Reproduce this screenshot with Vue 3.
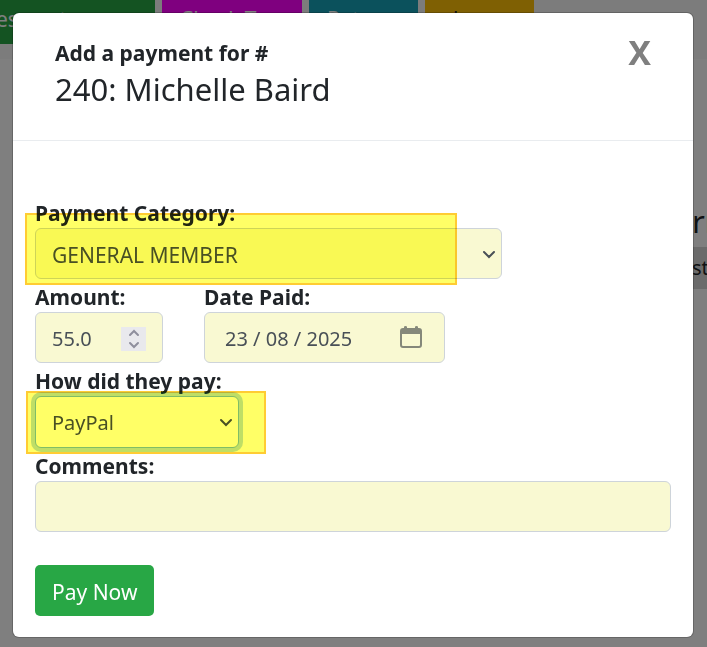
<script setup>
import { ref } from 'vue';

const category = ref('GENERAL MEMBER');
const amount = ref('55.0');
const datePaid = ref('23 / 08 / 2025');
const method = ref('PayPal');
const comments = ref('');
const showModal = ref(true);

const tabs = [
    { name: 'es cont', color: 'green' },
    { name: 'Check Tags', color: 'magenta' },
    { name: 'Return', color: 'teal' },
    { name: 'show', color: 'yellow' },
];

const step = (n) =>{
    amount.value = (Number(amount.value) + n).toFixed(1);
}

const closeModal = () =>{
    showModal.value = false;
}
</script>

<template>
    <div class="page">
        <nav class="tabs">
            <button v-for="tab in tabs" :key="tab.name" type="button" class="tab" :class="tab.color">{{ tab.name }}</button>
        </nav>
        <main class="behind">
            <div class="behind-title">r<span class="accent">r</span></div>
            <div class="behind-row">st<span class="accent">e</span></div>
        </main>
    </div>

    <div v-if="showModal" class="backdrop">
        <div class="modal" role="dialog" aria-labelledby="modal-title">
            <header class="modal-header">
                <h1 id="modal-title" class="title">
                    <strong>Add a payment for #</strong>
                    <span class="member">240: Michelle Baird</span>
                </h1>
                <button type="button" class="close" aria-label="Close" @click="closeModal">X</button>
            </header>

            <form class="modal-body" @submit.prevent>
                <div class="field category marked">
                    <label for="category">Payment Category:</label>
                    <div class="select-wrap">
                        <select id="category" v-model="category" class="control">
                            <option>GENERAL MEMBER</option>
                        </select>
                        <svg class="chevron" viewBox="0 0 14 10"><path d="M2 2l5 5 5-5" /></svg>
                    </div>
                </div>

                <div class="row">
                    <div class="field amount">
                        <label for="amount">Amount:</label>
                        <div class="control box">
                            <input id="amount" v-model="amount" type="text" inputmode="decimal" class="bare">
                            <div class="spinner">
                                <button type="button" aria-label="Increase" @click="step(1)">
                                    <svg viewBox="0 0 12 8"><path d="M2 6l4-4 4 4" /></svg>
                                </button>
                                <button type="button" aria-label="Decrease" @click="step(-1)">
                                    <svg viewBox="0 0 12 8"><path d="M2 2l4 4 4-4" /></svg>
                                </button>
                            </div>
                        </div>
                    </div>
                    <div class="field date">
                        <label for="date">Date Paid:</label>
                        <div class="control box">
                            <input id="date" v-model="datePaid" type="text" class="bare">
                            <button type="button" class="calendar" aria-label="Pick a date">
                                <svg viewBox="0 0 22 22">
                                    <path fill-rule="evenodd" d="M4 2V1a1.500 1 0 0 1 3 0V2h8V1a1.500 1 0 0 1 3 0V2h1a3 3 0 0 1 3 3v14a3 3 0 0 1-3 3H3a3 3 0 0 1-3-3V5a3 3 0 0 1 3-3zM2 8v11a1 1 0 0 0 1 1h16a1 1 0 0 0 1-1V8z" />
                                </svg>
                            </button>
                        </div>
                    </div>
                </div>

                <div class="field method marked">
                    <label for="method">How did they pay:</label>
                    <div class="select-wrap">
                        <select id="method" v-model="method" class="control active">
                            <option>PayPal</option>
                        </select>
                        <svg class="chevron" viewBox="0 0 14 10"><path d="M2 2l5 5 5-5" /></svg>
                    </div>
                </div>

                <div class="field">
                    <label for="comments">Comments:</label>
                    <input id="comments" v-model="comments" type="text" class="control">
                </div>

                <button type="submit" class="pay">Pay Now</button>
            </form>
        </div>
    </div>
</template>

<style>
body{
    margin: 0;
    background: #fff;
}
</style>

<style scoped>
*{
    box-sizing: border-box;
}

button, input, select{
    font: inherit;
}

.page, .backdrop{
    font-family: "Noto Sans", "Open Sans", sans-serif;
    font-size: 20px;
    line-height: 32px;
    color: #212529;
}

.page{
    min-height: 100vh;
    overflow: hidden;
}

.tabs{
    display: flex;
    gap: 7px;
    height: 59px;
    background: #f8f8f8;
}

.tab{
    height: 44px;
    padding: 0 18px 6px;
    border: 0;
    color: #fff;
    font-size: 21px;
    text-align: left;
    white-space: nowrap;
}

.green{
    width: 155px;
    padding-left: 0;
    text-indent: -4px;
    background: #28a745;
}
.magenta{
    width: 140px;
    background: #ff00ff;
}
.teal{
    width: 109px;
    background: #17a2b8;
}
.yellow{
    width: 109px;
    color: #212529;
    background: #ffc107;
}

.behind{
    display: flex;
    flex-direction: column;
    align-items: flex-end;
    padding-top: 136px;
}

.behind-title, .behind-row{
    width: 15px;
    white-space: nowrap;
}

.behind-title{
    font-size: 31px;
    line-height: 52px;
}

.behind-row{
    line-height: 42px;
    background: #d6d6d6;
}

.accent{
    color: #a85a20;
}

.backdrop{
    position: fixed;
    inset: 0;
    padding: 13px 14px 10px 13px;
    background: rgba(0, 0, 0, .5);
    overflow: auto;
}

.modal{
    background: #fff;
    border-radius: 6px;
    box-shadow: 0 0 0 1px rgba(0, 0, 0, .2);
}

.modal-header{
    display: flex;
    justify-content: space-between;
    align-items: flex-start;
    padding: 22px 42px 30px;
    border-bottom: 1px solid #e9ecef;
}

.title{
    margin: 0;
    padding-top: 2px;
    font-size: 21px;
    font-weight: 400;
    line-height: 32px;
}

.title strong, .member{
    display: block;
}

.member{
    font-size: 31px;
    line-height: 41px;
}

.close{
    padding: 0;
    border: 0;
    background: none;
    font-size: 34px;
    font-weight: 700;
    line-height: 34px;
    color: #7f7f7f;
}

.modal-body{
    padding: 54px 22px 21px;
}

.field{
    position: relative;
}

label{
    display: block;
    padding-top: 3px;
    font-size: 21px;
    font-weight: 700;
    line-height: 30px;
}

.control{
    display: block;
    width: 100%;
    height: 51px;
    padding: 2px 16px 0;
    border: 1px solid #ced4da;
    border-radius: 6px;
    outline: 0;
    background: #f9f9d2;
    color: #495057;
}

.select-wrap{
    position: relative;
}

select.control{
    appearance: none;
}

.method .control{
    height: 52px;
}

.category .control, .pay{
    font-size: 21px;
}

.chevron{
    position: absolute;
    right: 6px;
    top: 22px;
    width: 14px;
    height: 10px;
    fill: none;
    stroke: #495057;
    stroke-width: 2;
    stroke-linecap: round;
    pointer-events: none;
}

.category{
    max-width: 467px;
}

.method{
    max-width: 204px;
}

/* highlighter strokes over the fields */
.marked::after{
    content: "";
    position: absolute;
    border: 2px solid #fc3;
    background: #ff6;
    mix-blend-mode: multiply;
    pointer-events: none;
}

.category::after{
    inset: 18px 45px -6px -10px;
}

.method::after{
    inset: 28px -27px -6px -9px;
}

.active{
    border-color: #80bdff;
    background: #fff;
    box-shadow: 0 0 0 4px rgba(0, 123, 255, .25);
}

.row{
    display: flex;
    gap: 41px;
}

.amount{
    width: 128px;
}

.date{
    width: 241px;
}

.box{
    display: flex;
    align-items: center;
    justify-content: space-between;
}

.bare{
    flex: 1;
    min-width: 0;
    padding: 0;
    border: 0;
    outline: 0;
    background: none;
    color: inherit;
}

.date .box{
    padding: 2px 22px 0 20px;
}

.spinner{
    display: flex;
    flex-direction: column;
    width: 25px;
    height: 24px;
    background: #e9e9ed;
}

.spinner button{
    display: flex;
    flex: 1;
    align-items: center;
    justify-content: center;
    padding: 0;
    border: 0;
    background: none;
}

.spinner svg{
    width: 12px;
    height: 8px;
    fill: none;
    stroke: #8f8f9d;
    stroke-width: 2;
    stroke-linecap: round;
}

.calendar{
    display: flex;
    padding: 0 0 4px;
    border: 0;
    background: none;
}

.calendar svg{
    width: 22px;
    height: 22px;
    fill: #85887a;
}

.pay{
    display: block;
    height: 51px;
    margin-top: 33px;
    padding: 2px 17px 0;
    border: 0;
    border-radius: 5px;
    background: #28a745;
    color: #fff;
}
</style>
